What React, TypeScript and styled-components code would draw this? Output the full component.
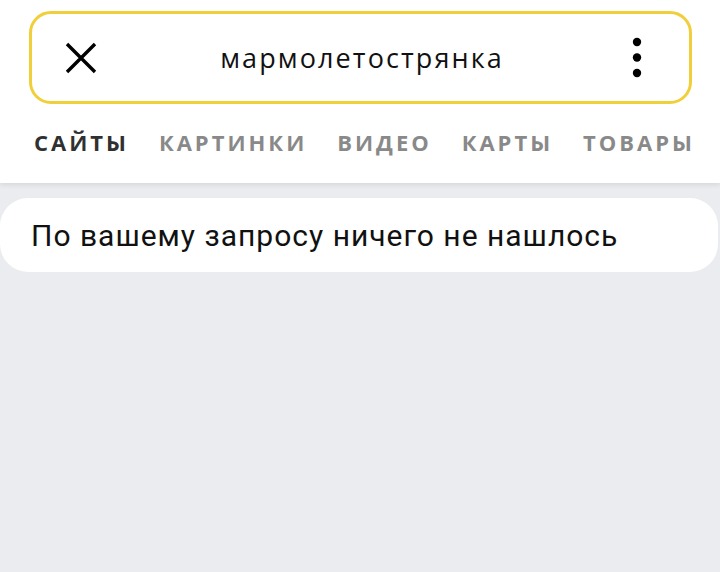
import React from "react";
import styled, { createGlobalStyle } from "styled-components";

const GlobalStyle = createGlobalStyle`
  html, body {
    margin: 0;
    padding: 0;
    background: #ebecef;
  }
  * { box-sizing: border-box; }
`;

const Page = styled.div`
  width: 720px;
  height: 572px;
  background: #ebecef;
  overflow: hidden;
`;

const Header = styled.header`
  background: #ffffff;
  height: 183px;
  padding: 11px 28px 0 29px;
  box-shadow: 0 2px 5px rgba(0, 0, 0, 0.09);
  position: relative;
  z-index: 1;
`;

const SearchBox = styled.div`
  height: 93px;
  border: 3.5px solid #f1cf3b;
  border-radius: 22px;
  display: flex;
  align-items: center;
  padding: 0 36px 0 33px;
`;

const IconButton = styled.button`
  width: 32px;
  height: 32px;
  padding: 0;
  border: 0;
  background: transparent;
  display: flex;
  align-items: center;
  justify-content: center;
  color: #000;
`;

const Query = styled.div`
  flex: 1;
  text-align: center;
  font-family: "Open Sans", "Noto Sans", sans-serif;
  font-size: 27px;
  letter-spacing: 2.1px;
  color: #111;
  padding-left: 6px;
`;

const Tabs = styled.nav`
  display: flex;
  justify-content: space-between;
  margin: 24px -3px 0 5px;
`;

const Tab = styled.span<{ $active?: boolean }>`
  font-family: "Open Sans", "Noto Sans", sans-serif;
  font-weight: 700;
  font-size: 22px;
  letter-spacing: 3px;
  color: ${(p) => (p.$active ? "#303030" : "#898989")};
  line-height: 28px;
`;

const Card = styled.div`
  margin: 15px 2px 0 0;
  height: 74px;
  background: #ffffff;
  border-radius: 28px;
  display: flex;
  align-items: center;
  padding-left: 31px;
  font-family: Roboto, "Liberation Sans", sans-serif;
  font-size: 30px;
  letter-spacing: 1px;
  color: #111;
`;

const CloseIcon = () => (
  <svg width="32" height="32" viewBox="0 0 32 32">
    <path d="M2 2 L30 30 M30 2 L2 30" stroke="#000" strokeWidth="3.4" strokeLinecap="butt" fill="none" />
  </svg>
);

const MoreIcon = () => (
  <svg width="12" height="42" viewBox="0 0 12 42">
    <circle cx="6" cy="5" r="4.2" fill="#000" />
    <circle cx="6" cy="20.5" r="4.2" fill="#000" />
    <circle cx="6" cy="36" r="4.2" fill="#000" />
  </svg>
);

const tabs = ["САЙТЫ", "КАРТИНКИ", "ВИДЕО", "КАРТЫ", "ТОВАРЫ"];

export default function App() {
  return (
    <Page>
      <GlobalStyle />
      <Header>
        <SearchBox>
          <IconButton aria-label="Очистить">
            <CloseIcon />
          </IconButton>
          <Query>мармолетострянка</Query>
          <IconButton aria-label="Меню">
            <MoreIcon />
          </IconButton>
        </SearchBox>
        <Tabs>
          {tabs.map((t, i) => (
            <Tab key={t} $active={i === 0}>
              {t}
            </Tab>
          ))}
        </Tabs>
      </Header>
      <Card>По вашему запросу ничего не нашлось</Card>
    </Page>
  );
}
